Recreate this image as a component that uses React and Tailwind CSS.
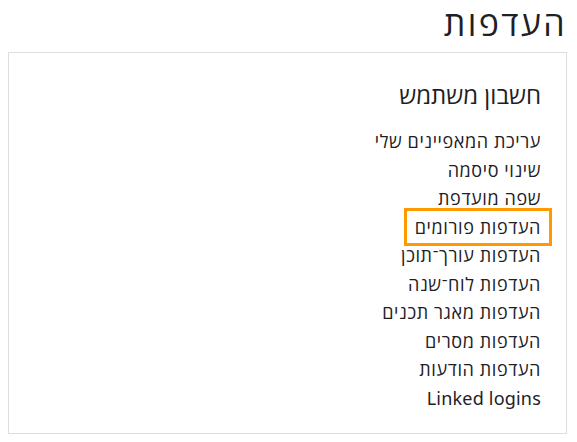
import React from "react";

const links = [
  "עריכת המאפיינים שלי",
  "שינוי סיסמה",
  "שפה מועדפת",
  "העדפות פורומים",
  "העדפות עורך־תוכן",
  "העדפות לוח־שנה",
  "העדפות מאגר תכנים",
  "העדפות מסרים",
  "העדפות הודעות",
];

function App() {
  return (
    <div
      dir="rtl"
      className="min-h-[442px] bg-white pl-2 pr-[10px] text-[#1d2125]"
      style={{ fontFamily: '"Open Sans", "Noto Sans", sans-serif' }}
    >
      <h1 className="text-[34px] leading-[46px] font-normal tracking-[2.4px]">העדפות</h1>
      <div className="mt-[6px] h-[382px] border border-[#dedede] pr-[25px] pt-[26px]">
        <h3 className="text-[24px] leading-[32px] font-normal mb-[16px]">חשבון משתמש</h3>
        <ul className="flex flex-col items-start text-[18px] leading-[28.5px] tracking-[0.6px]">
          {links.map((item, index) =>
            index === 3 ? (
              <li key={index} className="-mx-[8px] -my-[2px] px-[8px] py-[2px] outline-[3px] outline-solid outline-[#ff9900]">
                {item}
              </li>
            ) : (
              <li key={index}>{item}</li>
            )
          )}
          <li className="tracking-[0.2px]" style={{ fontFamily: '"Noto Sans", sans-serif' }}>
            Linked logins
          </li>
        </ul>
      </div>
    </div>
  );
}

export default App;
